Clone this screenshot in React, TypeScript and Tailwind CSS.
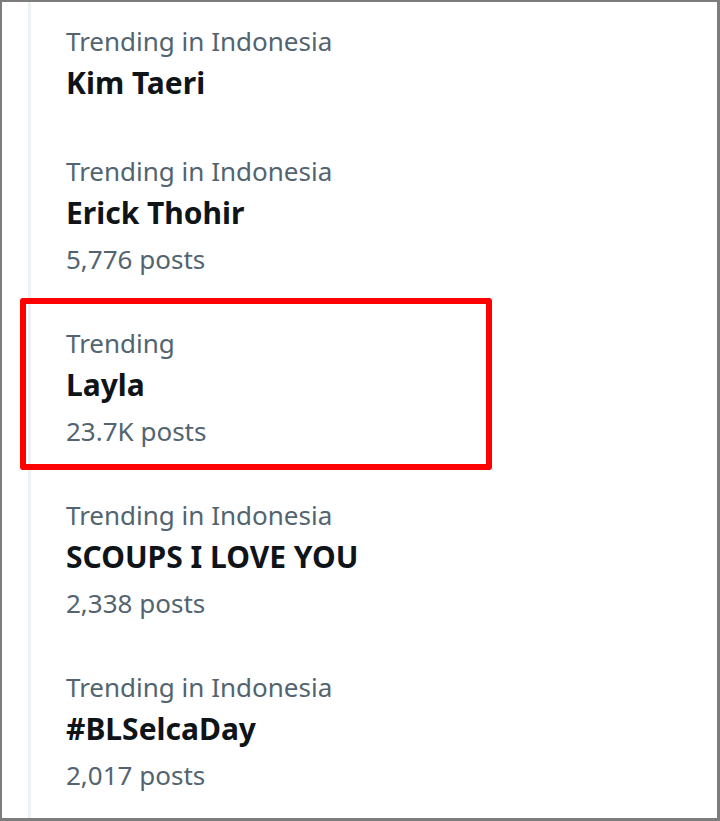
import React from "react";

type Trend = { label: string; title: string; posts?: string; highlight?: boolean };

const trends: Trend[] = [
  { label: "Trending in Indonesia", title: "Kim Taeri" },
  { label: "Trending in Indonesia", title: "Erick Thohir", posts: "5,776 posts" },
  { label: "Trending", title: "Layla", posts: "23.7K posts", highlight: true },
  { label: "Trending in Indonesia", title: "SCOUPS I LOVE YOU", posts: "2,338 posts" },
  { label: "Trending in Indonesia", title: "#BLSelcaDay", posts: "2,017 posts" },
];

export default function App() {
  return (
    <div
      className="w-[720px] h-[821px] bg-white border-l-2 border-t-2 border-r-[3px] border-b-[3px] border-[#7d7d7d] flex overflow-hidden"
      style={{ fontFamily: '"Noto Sans", "Open Sans", sans-serif' }}
    >
      <div className="w-[26px] shrink-0" />
      <div className="w-[3px] shrink-0 bg-[#eef1f3]" />
      <div className="flex-1 flex flex-col">
        {trends.map((t, i) => (
          <div
            key={i}
            className={`relative pl-[35px] pt-[21px] ${i === 0 ? "pb-[25px]" : "pb-[23px]"}`}
          >
            <div className="text-[26px] leading-[36px] text-[#536471]">{t.label}</div>
            <div className="text-[30px] leading-[48px] font-bold text-[#0f1419]">{t.title}</div>
            {t.posts && (
              <div className="text-[26px] leading-[44px] text-[#536471]">{t.posts}</div>
            )}
            {t.highlight && (
              <div className="absolute left-[-11px] top-[-6px] w-[472px] h-[172px] border-[6px] border-[#ff0000] rounded-[3px]" />
            )}
          </div>
        ))}
      </div>
    </div>
  );
}
